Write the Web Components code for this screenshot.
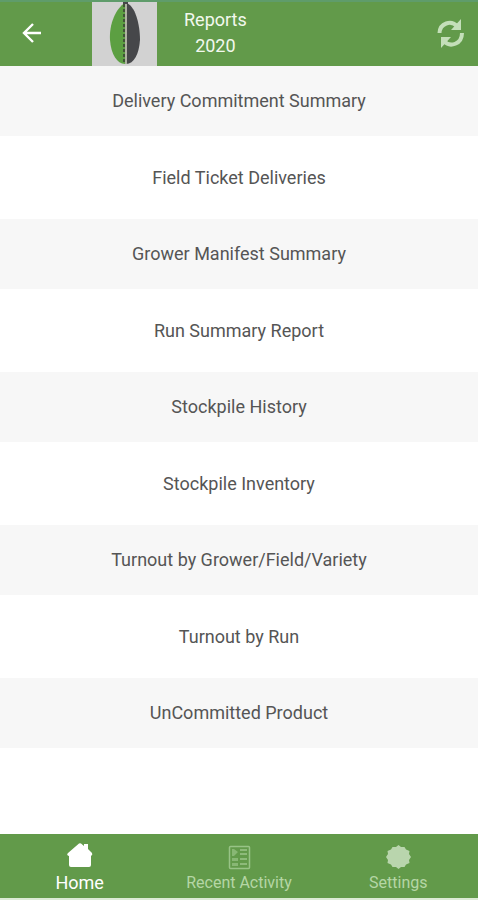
<!DOCTYPE html>
<html lang="en">
<head>
  <meta charset="utf-8">
  <meta name="viewport" content="width=device-width, initial-scale=1">
  <title>Reports</title>
  <style>
    body {
      margin: 0;
      background-color: #fff;
      font-family: Roboto, "Liberation Sans", sans-serif;
    }
  </style>
</head>
<body>
  <reports-app>
    <app-header slot="header">
      <span slot="title">Reports</span>
      <span slot="subtitle">2020</span>
    </app-header>

    <report-list>
      <report-item>Delivery Commitment Summary</report-item>
      <report-item>Field Ticket Deliveries</report-item>
      <report-item>Grower Manifest Summary</report-item>
      <report-item>Run Summary Report</report-item>
      <report-item>Stockpile History</report-item>
      <report-item>Stockpile Inventory</report-item>
      <report-item>Turnout by Grower/Field/Variety</report-item>
      <report-item>Turnout by Run</report-item>
      <report-item>UnCommitted Product</report-item>
    </report-list>

    <tab-bar slot="footer">
      <tab-item icon="home" active>Home</tab-item>
      <tab-item icon="activity">Recent Activity</tab-item>
      <tab-item icon="settings">Settings</tab-item>
    </tab-bar>
  </reports-app>

  <script>
    const TAB_ICONS = {
      home: `
        <path d="M13 1.500 Q14 1 15 1.500 L18 4 V2 H22 V7 L26 11 Q27 13 25 14 V23 Q25 25 23 25 H5 Q3 25 3 23 V14 Q0 13 2 11 Z" fill="currentColor"/>
      `,
      activity: `
        <rect x="4.500" y="4.500" width="20" height="22" rx="1" fill="none" stroke="currentColor" stroke-width="1.500"/>
        <path d="M7 7 H9 L13 10 L9 14 H7 Z M7 16 H13 V19 H7 Z M7 21 H13 V24 H7 Z" fill="currentColor" opacity="0.7"/>
        <path d="M15 8 H22 M15 12 H22 M15 17 H22 M15 22 H22" stroke="currentColor" stroke-width="2" opacity="0.8"/>
      `,
      settings: `
        <path d="M14.500 3 L17 5 L20.500 5 L22 7.500 L25.500 9 L25 12 L27 15 L25 18 L25.500 21 L22 22.500 L20.500 25 L17 25 L14.500 27 L12 25 L8.500 25 L7 22.500 L3.500 21 L4 18 L2 15 L4 12 L3.500 9 L7 7.500 L8.500 5 L12 5 Z" fill="currentColor"/>
      `
    };

    class ReportsApp extends HTMLElement {
      constructor() {
        super();

        this.root = this.attachShadow({ mode: 'open' });
        this.root.innerHTML = `
          <style>
            :host {
              display: flex;
              flex-direction: column;
              min-height: 100vh;
            }

            main {
              flex: 1;
            }
          </style>
          <slot name="header"></slot>
          <main><slot></slot></main>
          <slot name="footer"></slot>
        `;
      }
    }

    class AppHeader extends HTMLElement {
      constructor() {
        super();

        this.root = this.attachShadow({ mode: 'open' });
        this.root.innerHTML = `
          <style>
            :host {
              display: block;
              color: #f2f8ee;
            }

            header {
              display: flex;
              align-items: center;
              box-sizing: border-box;
              height: 66px;
              border-top: 2px solid #5f9c6b;
              background-color: #629a4a;
            }

            button {
              display: flex;
              padding: 0;
              border: 0;
              background: none;
              color: #fff;
              cursor: pointer;
            }

            .back {
              margin: 0 48px 0 20px;
            }

            .refresh {
              margin: 0 12px 0 auto;
              color: #c4dfb9;
            }

            .logo {
              flex: none;
              height: 64px;
              background-color: #d2d2d2;
            }

            h1 {
              margin: 0 0 2px 27px;
              font-size: 18px;
              font-weight: 400;
              line-height: 26px;
              text-align: center;
            }

            h1 ::slotted(span) {
              display: block;
            }
          </style>
          <header>
            <button class="back" type="button" aria-label="Back">
              <svg width="24" height="24" viewBox="0 0 24 24" fill="none" stroke="currentColor" stroke-width="2.400">
                <path d="M21 11 H4 M13 2 L4 11 L13 20"/>
              </svg>
            </button>
            <svg class="logo" width="65" height="64" viewBox="0 0 65 64" aria-hidden="true">
              <path d="M33 1 C24 6 17 22 18 38 C19 52 25 62 33 62 Z" fill="#5c9f42"/>
              <path d="M34 1 C43 3 48 22 48 38 C47 52 42 62 34 62 Z" fill="#46474a"/>
              <path d="M34 2 V62" stroke="#aeb3a2" stroke-width="2"/>
              <path d="M32 2 V62" stroke="#3f5436" stroke-width="2" stroke-dasharray="3 2"/>
              <path d="M31 1 H36" stroke="#46474a" stroke-width="2"/>
            </svg>
            <h1>
              <slot name="title"></slot>
              <slot name="subtitle"></slot>
            </h1>
            <button class="refresh" type="button" aria-label="Refresh">
              <svg width="30" height="30" viewBox="0 0 30 30" fill="none" stroke="currentColor" stroke-width="4">
                <path d="M3.500 14 C4 4 15 1 21 7"/>
                <path d="M26 14 C26 25 14 29 8 22"/>
                <path d="M25 0 V11 H15 Z M5 29 V18 H15 Z" fill="currentColor" stroke="none"/>
              </svg>
            </button>
          </header>
        `;
      }
    }

    class ReportList extends HTMLElement {
      constructor() {
        super();

        this.root = this.attachShadow({ mode: 'open' });
        this.root.innerHTML = `
          <style>
            :host {
              display: block;
            }

            ::slotted(report-item) {
              --row-height: 83px;
            }

            ::slotted(report-item:nth-child(odd)) {
              --row-height: 70px;
              --row-background: #f7f7f7;
            }
          </style>
          <nav aria-label="Reports"><slot></slot></nav>
        `;
      }
    }

    class ReportItem extends HTMLElement {
      constructor() {
        super();

        this.root = this.attachShadow({ mode: 'open' });
        this.root.innerHTML = `
          <style>
            :host {
              display: block;
            }

            a {
              display: flex;
              align-items: center;
              justify-content: center;
              min-height: var(--row-height);
              background-color: var(--row-background, #fff);
              color: #555;
              font-size: 18px;
              line-height: 24px;
              text-decoration: none;
            }
          </style>
          <a href="#"><slot></slot></a>
        `;
      }
    }

    class TabBar extends HTMLElement {
      constructor() {
        super();

        this.root = this.attachShadow({ mode: 'open' });
        this.root.innerHTML = `
          <style>
            :host {
              display: block;
            }

            nav {
              display: grid;
              grid-template-columns: repeat(3, 1fr);
              border-bottom: 2px solid #dcebd5;
              background-color: #629a4a;
            }
          </style>
          <nav aria-label="Main"><slot></slot></nav>
        `;
      }
    }

    class TabItem extends HTMLElement {
      constructor() {
        super();

        this.root = this.attachShadow({ mode: 'open' });
        this.root.innerHTML = `
          <style>
            :host {
              display: block;
              color: #b5d6a5;
              --icon-color: #b9d5ad;
            }

            :host([icon=activity]) {
              --icon-color: #98c386;
            }

            :host([active]) {
              color: #fff;
              --icon-color: #fff;
            }

            a {
              display: flex;
              flex-direction: column;
              align-items: center;
              gap: 2px;
              padding: 8px 0 4px;
              color: inherit;
              font-size: 16px;
              line-height: 22px;
              text-decoration: none;
            }

            :host([active]) a {
              font-size: 18px;
            }

            svg {
              color: var(--icon-color);
            }
          </style>
          <a href="#">
            <svg width="28" height="28" viewBox="0 0 28 28" aria-hidden="true">${TAB_ICONS[this.getAttribute('icon')]}</svg>
            <slot></slot>
          </a>
        `;
      }
    }

    customElements.define('reports-app', ReportsApp);
    customElements.define('app-header', AppHeader);
    customElements.define('report-list', ReportList);
    customElements.define('report-item', ReportItem);
    customElements.define('tab-bar', TabBar);
    customElements.define('tab-item', TabItem);
  </script>
</body>
</html>
